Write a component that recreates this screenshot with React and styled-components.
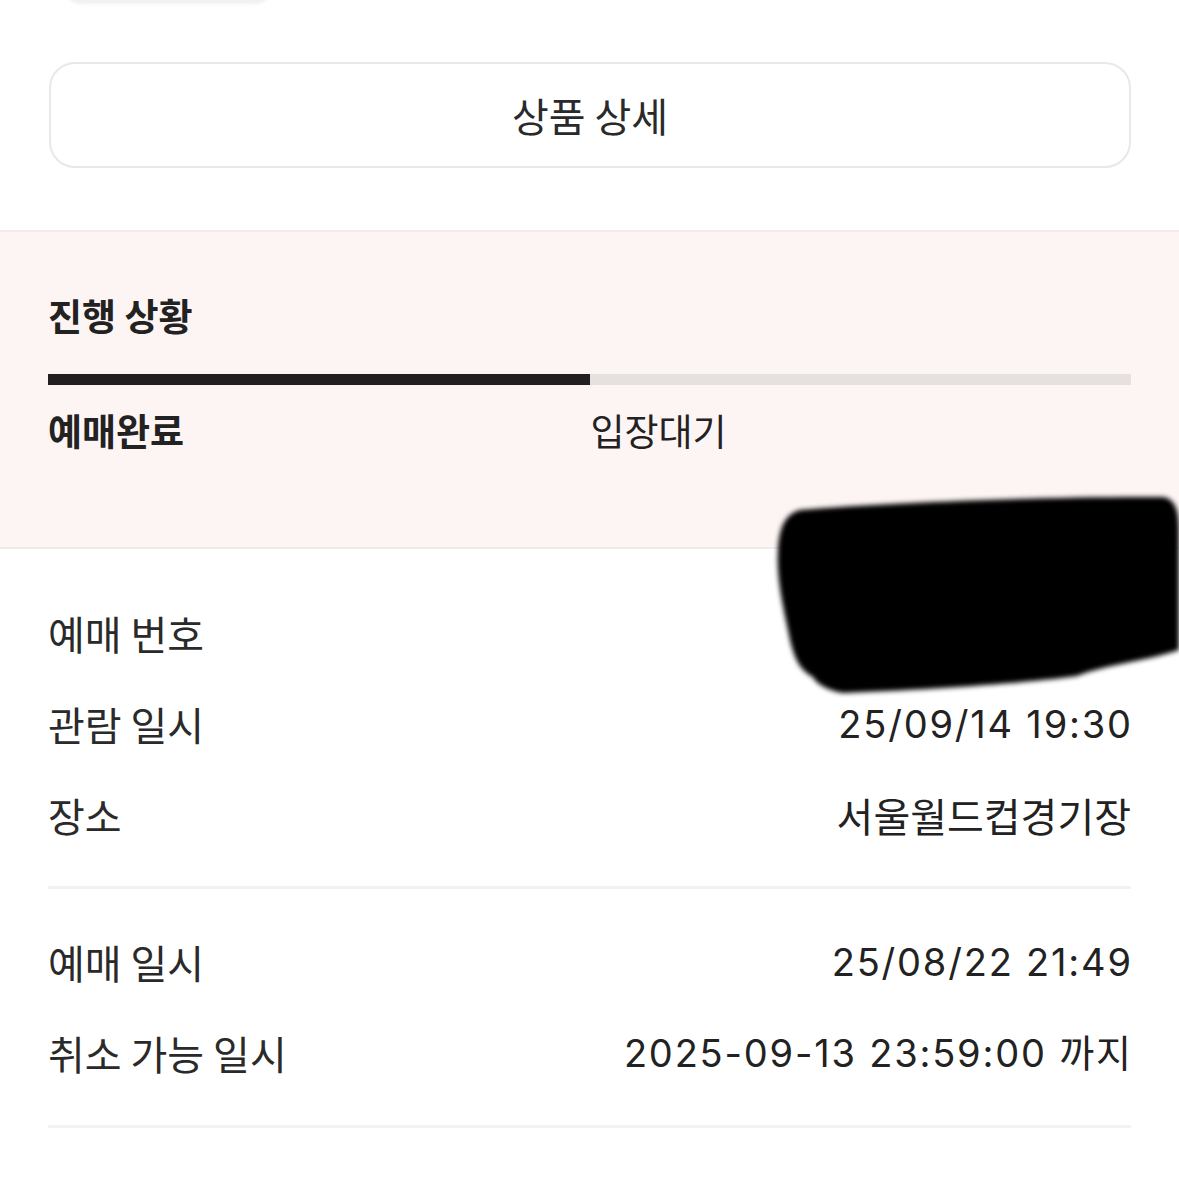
import styled, { createGlobalStyle } from "styled-components";

const GlobalStyle = createGlobalStyle`
  body {
    margin: 0;
    background: #fff;
    font-family: "Noto Sans CJK KR", "Noto Sans", sans-serif;
    color: #222;
  }
`;

const infoTop = [
  { label: "예매 번호", value: "" },
  { label: "관람 일시", value: "25/09/14 19:30" },
  { label: "장소", value: "서울월드컵경기장", ko: true },
];

const infoBottom = [
  { label: "예매 일시", value: "25/08/22 21:49" },
  { label: "취소 가능 일시", value: "2025-09-13 23:59:00 까지" },
];

export default function App() {
  return (
    <>
      <GlobalStyle />
      <Page>
        <TopPill />
        <Padded>
          <DetailButton>상품 상세</DetailButton>
        </Padded>

        <Progress>
          <ProgressTitle>진행 상황</ProgressTitle>
          <Bar>
            <BarFill style={{ width: "50%" }} />
          </Bar>
          <Steps>
            <Step active>예매완료</Step>
            <Step>입장대기</Step>
          </Steps>
        </Progress>

        <InfoSection top={62} bottom={49}>
          {infoTop.map((row) => (
            <Row key={row.label}>
              <Label>{row.label}</Label>
              <Value ko={row.ko}>{row.value}</Value>
            </Row>
          ))}
        </InfoSection>
        <Divider />
        <InfoSection top={51} bottom={50}>
          {infoBottom.map((row) => (
            <Row key={row.label}>
              <Label>{row.label}</Label>
              <Value>{row.value}</Value>
            </Row>
          ))}
        </InfoSection>
        <Divider />
        <InfoSection top={52} bottom={40}>
          <Row>
            <Label>결제 수단</Label>
            <Value>신용카드</Value>
          </Row>
        </InfoSection>

        <Redaction viewBox="0 0 409 215" width="409" height="215">
          <defs>
            <filter id="soft" x="-10%" y="-10%" width="120%" height="120%">
              <feGaussianBlur stdDeviation="2.5" />
            </filter>
          </defs>
          <path
            filter="url(#soft)"
            fill="#000"
            d="M30 20 C120 12 300 6 392 7 C405 8 409 20 409 40 L409 160 C380 170 330 176 307 186 C250 194 150 200 73 203 C55 200 45 192 43 187 C30 180 25 170 20 150 C14 120 6 90 8 60 C9 40 14 24 30 20 Z"
          />
        </Redaction>
      </Page>
    </>
  );
}

const Page = styled.div`
  position: relative;
  width: 1179px;
  height: 1180px;
  overflow: hidden;
  background: #fff;
`;

const TopPill = styled.div`
  width: 212px;
  height: 40px;
  margin: -37px 0 0 62px;
  border-radius: 20px;
  background: #f1f1f1;
  box-shadow: 0 2px 3px rgba(0, 0, 0, 0.04);
`;

const Padded = styled.div`
  padding: 59px 48px 62px 49px;
`;

const DetailButton = styled.button`
  display: flex;
  align-items: center;
  justify-content: center;
  width: 100%;
  height: 106px;
  box-sizing: border-box;
  border: 2px solid #e8e8e8;
  border-radius: 26px;
  background: #fff;
  font-family: inherit;
  font-size: 40px;
  font-weight: 400;
  color: #2a2a2a;
  padding: 0;
`;

const Progress = styled.section`
  background: #fdf5f4;
  border-top: 2px solid #f4ebea;
  border-bottom: 2px solid #efebeb;
  padding: 62px 48px 96px;
`;

const ProgressTitle = styled.h2`
  margin: 0;
  font-size: 37px;
  font-weight: 700;
  line-height: 42px;
  color: #222;
`;

const Bar = styled.div`
  margin-top: 38px;
  height: 11px;
  background: #e6e1de;
  display: flex;
`;

const BarFill = styled.div`
  height: 100%;
  background: #231f20;
`;

const Steps = styled.div`
  display: grid;
  grid-template-columns: 1fr 1fr;
  margin-top: 24px;
`;

const Step = styled.div`
  font-size: 37px;
  line-height: 42px;
  font-weight: ${(props) => (props.active ? 700 : 400)};
  color: #222;
  padding-left: ${(props) => (props.active ? "0" : "1px")};
`;

const InfoSection = styled.section`
  display: flex;
  flex-direction: column;
  gap: 47px;
  padding: ${(props) => props.top}px 48px ${(props) => props.bottom}px;
`;

const Row = styled.div`
  display: flex;
  justify-content: space-between;
  align-items: center;
  height: 44px;
`;

const Label = styled.span`
  font-size: 40px;
  line-height: 44px;
  color: #2a2a2a;
`;

const Value = styled.span`
  font-family: ${(props) =>
    props.ko
      ? '"Noto Sans CJK KR", sans-serif'
      : 'Inter, "Noto Sans CJK KR", sans-serif'};
  font-size: ${(props) => (props.ko ? "40px" : "38px")};
  letter-spacing: ${(props) => (props.ko ? "0" : "1.8px")};
  margin-right: ${(props) => (props.ko ? "0" : "-1.8px")};
  line-height: 44px;
  color: #222;
`;

const Divider = styled.hr`
  margin: 0 48px;
  border: none;
  height: 3px;
  background: #f2f2f2;
`;

const Redaction = styled.svg`
  position: absolute;
  left: 770px;
  top: 490px;
`;
